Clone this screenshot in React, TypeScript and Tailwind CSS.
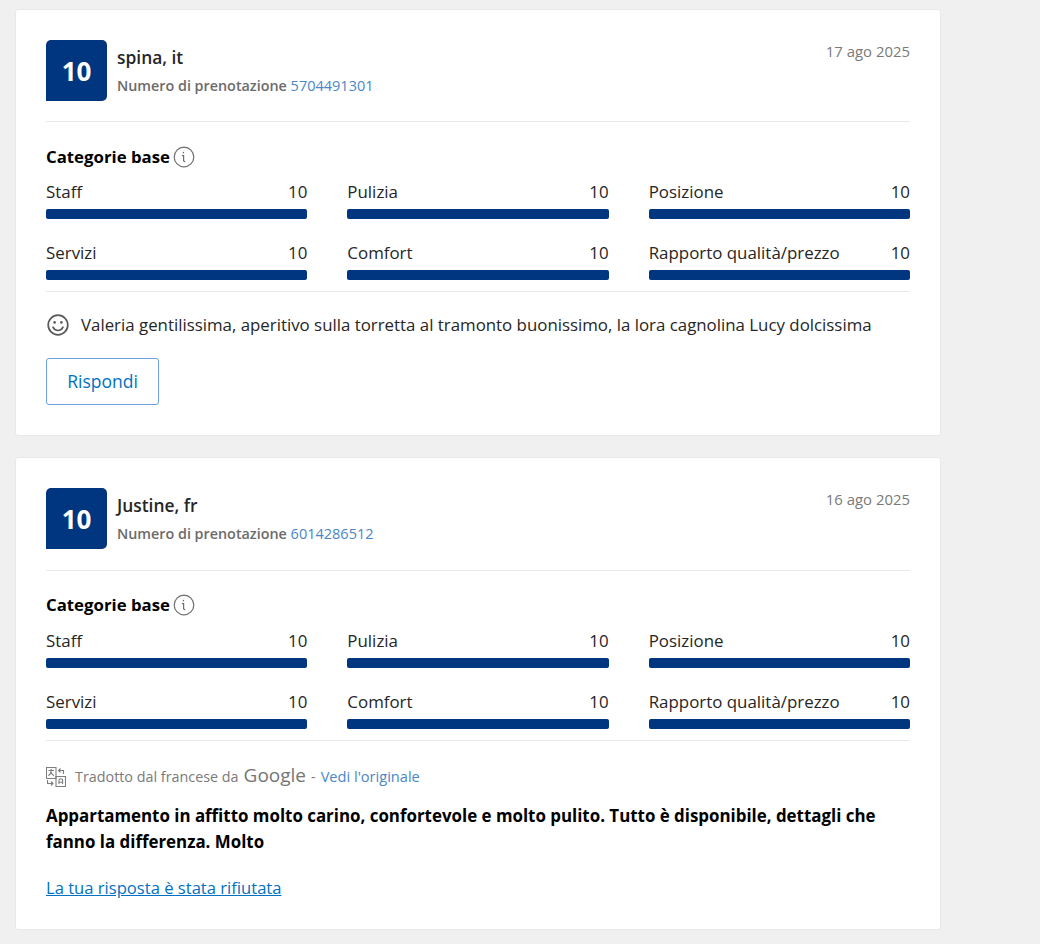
import React from 'react';

const font = { fontFamily: '"Open Sans", "Noto Sans", sans-serif' };

const categories = [
  { name: 'Staff', score: 10 },
  { name: 'Pulizia', score: 10 },
  { name: 'Posizione', score: 10 },
  { name: 'Servizi', score: 10 },
  { name: 'Comfort', score: 10 },
  { name: 'Rapporto qualità/prezzo', score: 10 },
];

function Smiley() {
  return (
    <svg width="24" height="24" viewBox="0 0 24 24" fill="none" stroke="#5a5a5a" strokeWidth="1.7" className="shrink-0">
      <circle cx="12" cy="12" r="9.8" />
      <circle cx="8.6" cy="9.4" r="1.3" fill="#5a5a5a" stroke="none" />
      <circle cx="15.4" cy="9.4" r="1.3" fill="#5a5a5a" stroke="none" />
      <path d="M7 14.2c1 2.1 2.9 3.3 5 3.3s4-1.2 5-3.3" strokeLinecap="round" />
    </svg>
  );
}

function InfoIcon() {
  return (
    <svg width="22" height="22" viewBox="0 0 22 22" fill="none" stroke="#6e6e6e" strokeWidth="1.2" className="shrink-0">
      <circle cx="11" cy="11" r="9.8" />
      <circle cx="10.4" cy="6.6" r="0.8" fill="#6e6e6e" stroke="none" />
      <path d="M9.4 9.6h1.2v5c0 .7.4 1 1.2 1" strokeLinecap="round" />
    </svg>
  );
}

function TranslateIcon() {
  return (
    <svg width="20" height="20" viewBox="0 0 20 20" fill="none" stroke="#7d7d7d" strokeWidth="1.1" className="shrink-0">
      <path d="M.5.5h9.5v11H.5z" />
      <path d="M2.5 3.5h5.5M5.2 2v1.5M5.2 3.5c0 2.5-1 4-2.8 5.2M5.2 5.5c.5 1.3 1.4 2.4 2.8 3.1" />
      <path d="M14.5 1.5L12.5 3.5l2 2M12.5 3.5h5v3.5" />
      <path d="M10 9.5h9.5v10H10z" />
      <path d="M13 17v-3.5a1.8 1.8 0 0 1 3.6 0V17M13 15.2h3.6" />
      <path d="M1.5 13v3.5h5.5M5 14.5l2 2-2 2" />
    </svg>
  );
}

function Scores() {
  return (
    <div className="grid grid-cols-3 gap-x-10 gap-y-[19px] pb-[11px] border-b border-[#e8e8e8]">
      {categories.map((c) => (
        <div key={c.name}>
          <div className="flex justify-between items-center h-[32px] pb-[2px] text-[16.9px] text-[#262626]">
            <span>{c.name}</span>
            <span>{c.score}</span>
          </div>
          <div className="h-[10px] rounded-[2px] bg-[#003580]" />
        </div>
      ))}
    </div>
  );
}

function Header({ name, id, date, className }: { name: string; id: string; date: string; className: string }) {
  return (
    <div className={`flex items-start border-b border-[#e8e8e8] ${className}`}>
      <div className="w-[61px] h-[61px] pt-[1px] rounded-[5px] rounded-bl-none bg-[#003580] flex items-center justify-center text-white text-[26px] font-bold">
        10
      </div>
      <div className="ml-[10px] flex-1">
        <div className="h-[35px] flex items-center text-[17.4px] font-semibold text-[#262626]">{name}</div>
        <div className="mt-[1px] text-[14.35px] leading-[20px] text-[#6b6b6b]">
          <span className="font-semibold">Numero di prenotazione</span>{' '}
          <span className="text-[14.5px] text-[#4a86c8]">{id}</span>
        </div>
      </div>
      <div className="text-[14.9px] leading-[22px] text-[#7a7a7a]">{date}</div>
    </div>
  );
}

function BaseTitle({ className }: { className: string }) {
  return (
    <div className={`flex items-center gap-[3px] h-[24px] text-[16.8px] font-bold text-black ${className}`}>
      <span>Categorie base</span>
      <InfoIcon />
    </div>
  );
}

export default function App() {
  return (
    <div style={font} className="min-h-[944px] bg-[#f0f0f0] pt-[9px] pl-[15px] w-[1040px] overflow-hidden">
      <div className="w-[926px] bg-white rounded-[3px] border border-[#e8e8e8] px-[30px] pt-[30px] pb-[30px]">
        <Header name="spina, it" id="5704491301" date="17 ago 2025" className="pb-5" />
        <BaseTitle className="mt-[23px] mb-[8px]" />
        <Scores />
        <div className="flex items-center gap-[11px] mt-[21px] text-[16.85px] text-[#262626] h-[24px]">
          <Smiley />
          <span>Valeria gentilissima, aperitivo sulla torretta al tramonto buonissimo, la lora cagnolina Lucy dolcissima</span>
        </div>
        <button className="block mt-[21px] w-[113px] h-[47px] rounded-[3px] border border-[#6ca0e0] text-[17.5px] font-medium text-[#0071c2]">
          Rispondi
        </button>
      </div>

      <div className="w-[926px] mt-[21px] bg-white rounded-[3px] border border-[#e8e8e8] px-[30px] pt-[30px] pb-[29px]">
        <Header name="Justine, fr" id="6014286512" date="16 ago 2025" className="pb-[21px]" />
        <BaseTitle className="mt-[22px] mb-[9px]" />
        <Scores />
        <div className="flex items-center mt-[24px] h-[24px] text-[14.35px] text-[#7a7a7a]">
          <TranslateIcon />
          <span className="ml-[9px]">Tradotto dal francese da</span>
          <span className="ml-[5px] -mt-[3px] text-[19px] text-[#757575]">Google</span>
          <span className="ml-[5px]">-</span>
          <span className="ml-[5px] text-[14.6px] text-[#4a86c8]">Vedi l'originale</span>
        </div>
        <p className="mt-[14px] text-[16.9px] leading-[26px] font-bold text-black">
          Appartamento in affitto molto carino, confortevole e molto pulito. Tutto è disponibile, dettagli che fanno la differenza. Molto
        </p>
        <a className="block mt-[21px] text-[16.6px] leading-[24px] text-[#0071c2] underline">La tua risposta è stata rifiutata</a>
      </div>
    </div>
  );
}
